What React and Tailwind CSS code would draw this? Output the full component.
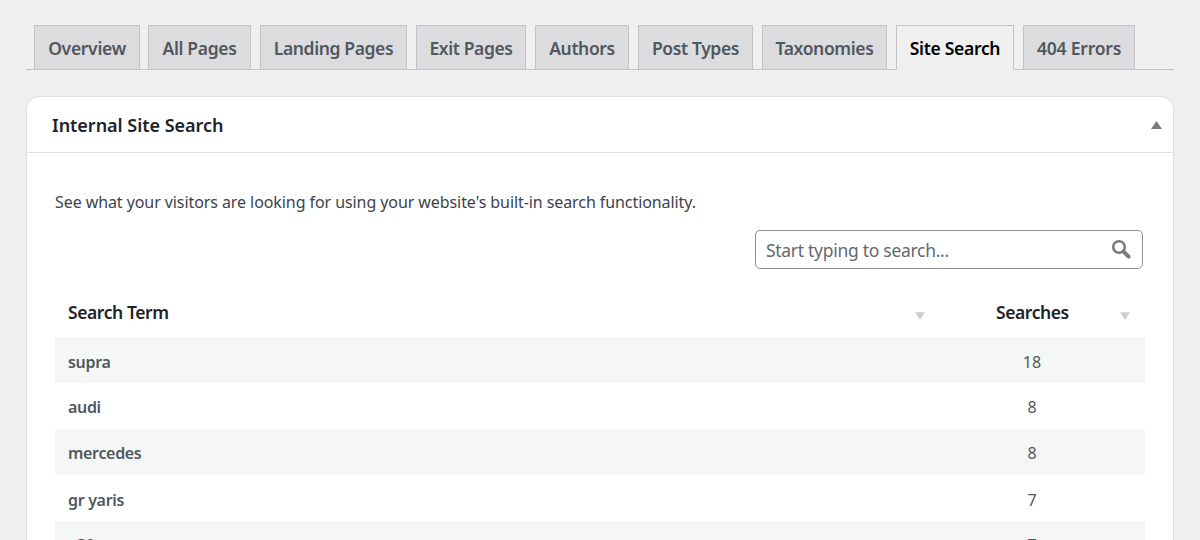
const tabs = [
  { label: "Overview", cls: "w-[106px] tracking-[-0.3px]" },
  { label: "All Pages", cls: "w-[103px] ml-2 tracking-[-0.35px]" },
  { label: "Landing Pages", cls: "w-[147px] ml-[9px] tracking-[-0.38px]" },
  { label: "Exit Pages", cls: "w-[110px] ml-[9px] tracking-[-0.38px]" },
  { label: "Authors", cls: "w-[94px] ml-[9px] tracking-[-0.38px]" },
  { label: "Post Types", cls: "w-[115px] ml-[9px] tracking-[-0.38px]" },
  { label: "Taxonomies", cls: "w-[125px] ml-[9px] tracking-[-0.38px]" },
  { label: "Site Search", cls: "w-[118px] ml-[9px] tracking-[-0.3px]", active: true },
  { label: "404 Errors", cls: "w-[112px] ml-[9px] tracking-[-0.2px]" },
];

const rows = [
  { term: "supra", count: "18", cls: "pt-[3px]" },
  { term: "audi", count: "8", cls: "pt-[1px]" },
  { term: "mercedes", count: "8", cls: "pt-[1px]" },
  { term: "gr yaris", count: "7", cls: "pt-[3px]" },
  { term: "e30", count: "7", cls: "pt-[1px]" },
];

function SortArrow() {
  return (
    <svg width="10" height="8" viewBox="0 0 10 8" className="mt-[7px] shrink-0">
      <path d="M0 0.3h10L5 8z" fill="#cdcfd1" />
    </svg>
  );
}

export default function App() {
  return (
    <div className="h-[540px] w-[1200px] overflow-hidden bg-[#efefef] px-[26px] pt-[25px] font-['Noto_Sans',sans-serif]">
      <nav className="flex h-[45px] w-[1148px] border-b border-[#c3c4c7] pl-2">
        {tabs.map((t) => (
          <a
            key={t.label}
            className={`flex h-[45px] shrink-0 items-center justify-center border border-[#c3c4c7] pt-px text-[17.5px] font-[560] whitespace-nowrap ${
              t.active ? "border-b-[#efefef] bg-[#efefef] text-black" : "bg-[#dcdcde] text-[#50575e]"
            } ${t.cls}`}
          >
            {t.label}
          </a>
        ))}
      </nav>

      <section className="mt-[26px] h-[520px] w-[1148px] rounded-[13px] border border-[#dfdfe0] bg-white">
        <header className="flex h-[56px] items-center justify-between border-b border-[#dfdfe0] pr-[11px] pl-[25px]">
          <h2 className="pt-[2px] text-[18px] font-[560] tracking-[-0.03px] whitespace-nowrap text-[#1d2327]">Internal Site Search</h2>
          <svg width="11" height="8" viewBox="0 0 11 8">
            <path d="M5.5 0L11 8H0z" fill="#787c82" />
          </svg>
        </header>

        <div className="px-7 pt-[37px]">
          <p className="h-[24px] text-[16px] leading-[24px] tracking-[-0.08px] whitespace-nowrap text-[#3c434a]">
            See what your visitors are looking for using your website's built-in search functionality.
          </p>

          <div className="mt-[16px] mr-[2px] ml-auto flex h-[39px] w-[388px] items-center justify-between rounded-[5px] border border-[#8c8f94] pr-[10px] pl-[10px]">
            <span className="pt-[2px] text-[17.5px] tracking-[-0.29px] whitespace-nowrap text-[#646970]">Start typing to search...</span>
            <svg width="21" height="21" viewBox="0 0 21 21" fill="none" stroke="#787c82" className="-mt-px">
              <circle cx="8" cy="8" r="5.8" strokeWidth="2.6" />
              <path d="M12.4 12.4L17.6 17.6" strokeWidth="4" strokeLinecap="round" />
            </svg>
          </div>

          <div className="mt-[20px] h-[251px]">
            <div className="flex h-[48px] items-center pb-[2px] text-[17.5px] font-[560] text-[#1d2327]">
              <div className="flex w-[884px] items-center justify-between pr-[14px] pl-[13px]">
                <span className="tracking-[-0.42px]">Search Term</span>
                <SortArrow />
              </div>
              <div className="flex flex-1 items-center justify-between pr-[15px] pl-[57px]">
                <span className="tracking-[-0.42px]">Searches</span>
                <SortArrow />
              </div>
            </div>
            {rows.map((r, i) => (
              <div
                key={r.term}
                className={`flex h-[46px] items-center text-[16px] ${r.cls} ${i % 2 === 0 ? "bg-[#f5f7f7]" : "bg-white"}`}
              >
                <span className="w-[884px] pl-[13px] font-[560] tracking-[-0.32px] text-[#50575e]">{r.term}</span>
                <span className="w-[186px] text-center text-[#50575e]">{r.count}</span>
              </div>
            ))}
          </div>
        </div>
      </section>
    </div>
  );
}
